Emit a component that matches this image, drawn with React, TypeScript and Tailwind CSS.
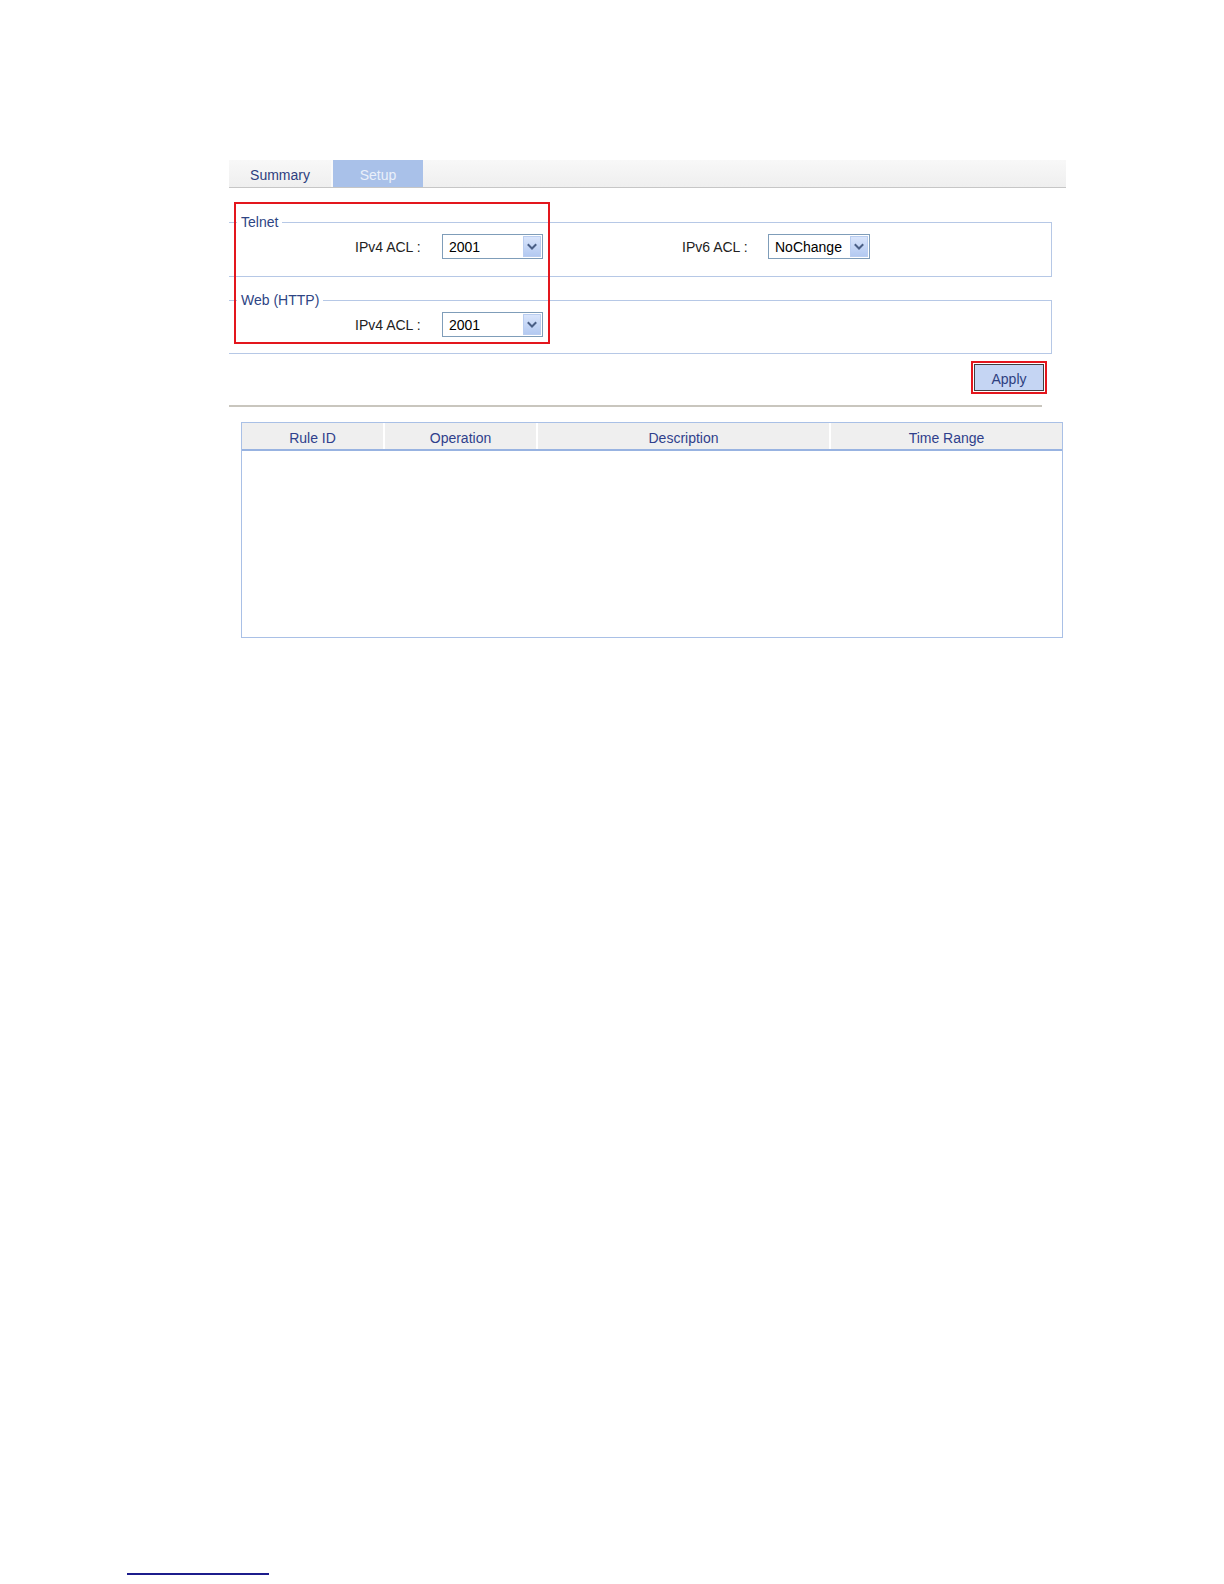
import React from "react";

const Chevron: React.FC = () => (
  <svg width="10" height="8" viewBox="0 0 10 8" fill="none">
    <path d="M1.5 2 L5 5.5 L8.5 2" stroke="#4a5f86" strokeWidth="2" strokeLinecap="square" />
  </svg>
);

const SelectBox: React.FC<{ value: string; width: string }> = ({ value, width }) => (
  <div
    className={`${width} flex h-[25px] items-stretch border border-[#7f9db9] bg-white p-[1px]`}
  >
    <span className="flex-1 pl-[5px] pt-[1px] text-[14px] leading-[21px] text-black">{value}</span>
    <span className="flex w-[18px] items-center justify-center border border-[#b9cdf0] bg-gradient-to-b from-[#d9e5fb] to-[#b3c9f1]">
      <Chevron />
    </span>
  </div>
);

const Field: React.FC<{ legend: string; children: React.ReactNode; className?: string }> = ({
  legend,
  children,
  className,
}) => (
  <fieldset className={`w-[823px] border-t border-r border-b border-[#b6c8e6] ${className ?? ""}`}>
    <legend className="ml-[8px] px-[4px] text-[14px] leading-[16px] text-[#2e4584]">{legend}</legend>
    {children}
  </fieldset>
);

export default function App() {
  return (
    <div className="relative h-[1584px] w-[1224px] bg-white font-['Liberation_Sans',Arial,sans-serif]">
      <div className="ml-[229px] w-[837px] pt-[160px]">
        {/* tabs */}
        <div className="flex h-[28px] border-b border-[#c6c6c6] bg-gradient-to-b from-[#f8f8f8] to-[#efefef]">
          <div className="flex w-[104px] items-center justify-center border-r-2 border-[#fafafa] pt-[4px] text-[14px] text-[#2e3f7f]">
            Summary
          </div>
          <div className="flex w-[90px] items-center justify-center bg-[#a9c1e9] pt-[4px] text-[14px] text-[#eaf0fa]">
            Setup
          </div>
        </div>

        {/* settings */}
        <div className="relative mt-[26px]">
          <Field legend="Telnet">
            <div className="flex items-center pt-[4px] pb-[17px] pl-[126px]">
              <span className="w-[87px] pt-[1px] text-[14px] text-[#222]">IPv4 ACL :</span>
              <SelectBox value="2001" width="w-[101px]" />
              <span className="ml-[139px] w-[86px] pt-[1px] text-[14px] text-[#222]">IPv6 ACL :</span>
              <SelectBox value="NoChange" width="w-[102px]" />
            </div>
          </Field>
          <Field legend="Web (HTTP)" className="mt-[15px]">
            <div className="flex items-center pt-[4px] pb-[16px] pl-[126px]">
              <span className="w-[87px] pt-[1px] text-[14px] text-[#222]">IPv4 ACL :</span>
              <SelectBox value="2001" width="w-[101px]" />
            </div>
          </Field>
          <div className="pointer-events-none absolute top-[-12px] left-[5px] h-[142px] w-[316px] border-2 border-[#e3161d]" />
        </div>

        <div className="mt-[7px] flex justify-end pr-[19px]">
          <div className="border-2 border-[#e3161d] p-[1px]">
            <button className="h-[27px] w-[70px] border border-[#3f3f3f] bg-[#c5d5f3] pt-[3px] text-[14px] leading-[20px] text-[#2e3f7f]">
              Apply
            </button>
          </div>
        </div>

        <div className="mt-[11px] h-[2px] w-[813px] bg-[#c9c6be]" />

        {/* table */}
        <div className="mt-[15px] ml-[12px] h-[216px] w-[822px] border border-[#a9c0e6]">
          <div className="flex h-[28px] border-b-2 border-[#98b3e1] bg-[#efefef] text-[14px] text-[#2f3f8c]">
            <div className="flex w-[141px] items-center justify-center pt-[4px]">Rule ID</div>
            <div className="flex w-[153px] items-center justify-center border-l-2 border-white pt-[4px]">Operation</div>
            <div className="flex w-[293px] items-center justify-center border-l-2 border-white pt-[4px]">Description</div>
            <div className="flex flex-1 items-center justify-center border-l-2 border-white pt-[4px]">Time Range</div>
          </div>
        </div>
      </div>

      <div className="mt-[935px] ml-[127px] h-[2px] w-[142px] bg-[#1c1c8c]" />
    </div>
  );
}
